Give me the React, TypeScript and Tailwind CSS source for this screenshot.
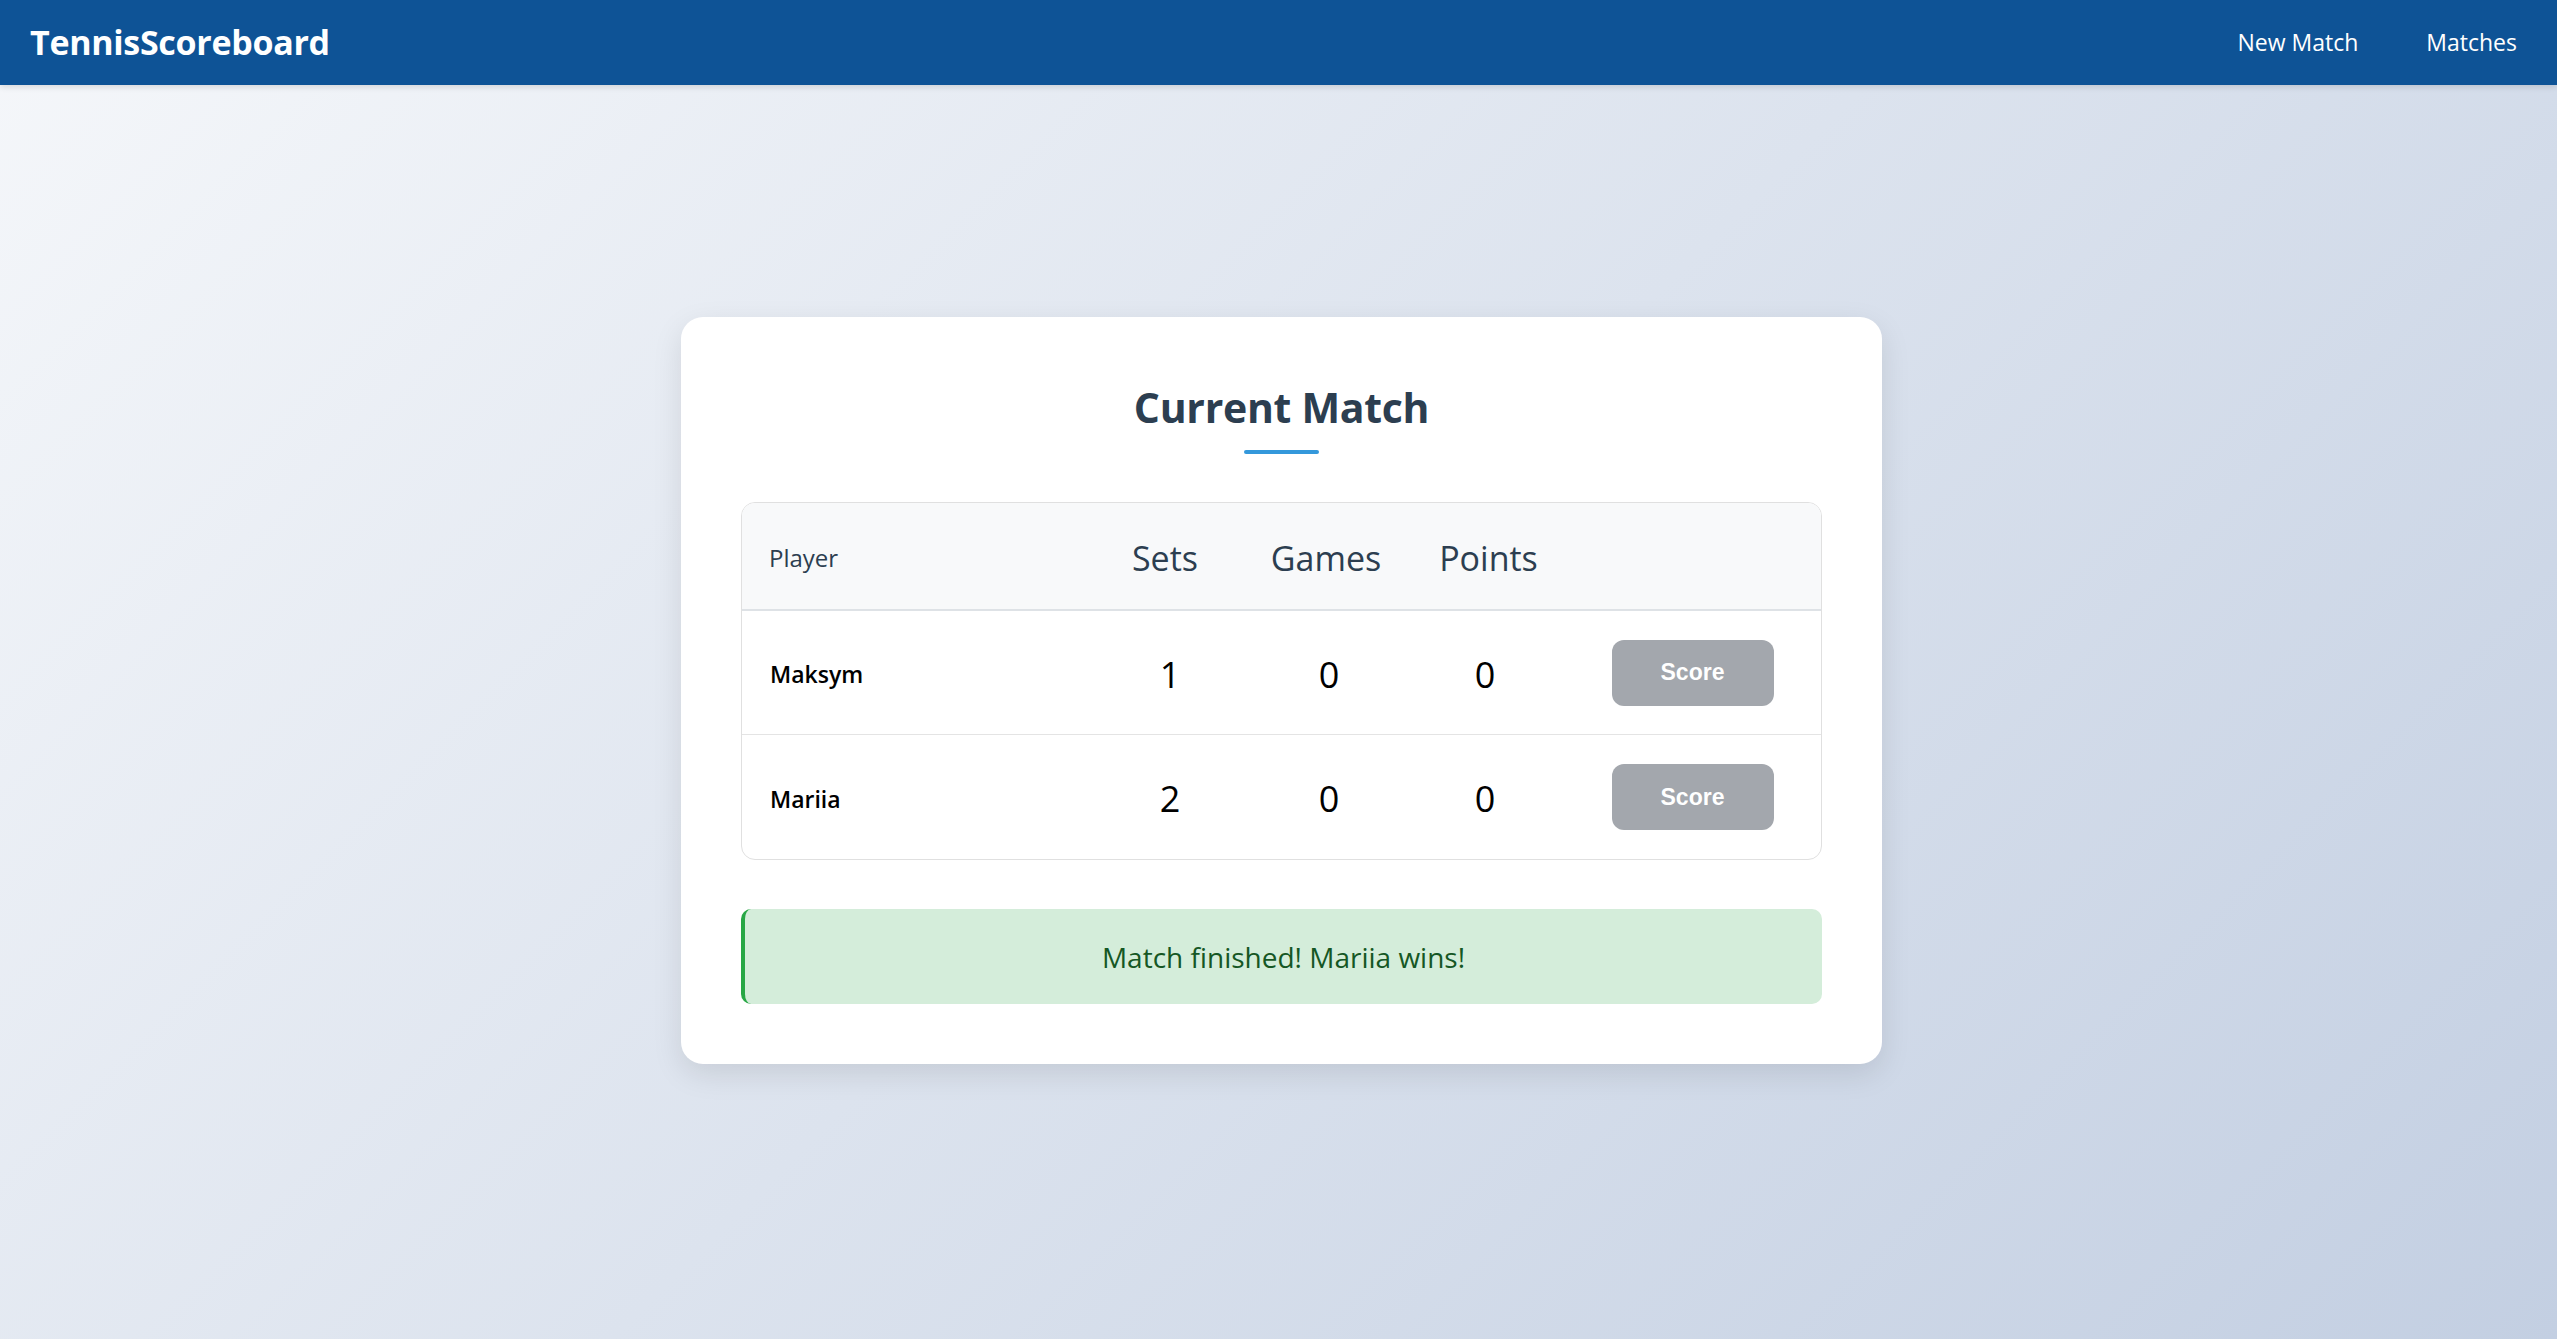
import React from "react";

const rows = [
  { name: "Maksym", sets: 1, games: 0, points: 0 },
  { name: "Mariia", sets: 2, games: 0, points: 0 },
];

export default function App() {
  return (
    <div
      className="min-h-screen w-full bg-[linear-gradient(135deg,#f5f7fa_0%,#c3cfe2_100%)]"
      style={{ fontFamily: '"Open Sans", "Noto Sans", sans-serif' }}
    >
      <header className="h-[85px] bg-[#0e5396] flex items-center justify-between pl-[30px] pr-[40px] shadow-[0_2px_6px_rgba(0,0,0,0.12)]">
        <div className="text-white font-bold text-[34px] tracking-[-0.3px]">TennisScoreboard</div>
        <nav className="flex items-center gap-[68px] text-white text-[23px]">
          <a>New Match</a>
          <a>Matches</a>
        </nav>
      </header>

      <main className="flex justify-center pl-[6px] pt-[232px] pb-[274px]">
        <div className="w-[1201px] bg-white rounded-[22px] shadow-[0_10px_30px_rgba(0,0,0,0.1)] px-[60px] pt-[62px] pb-[60px]">
          <div className="flex flex-col items-center">
            <h2 className="text-[41px] leading-[56px] font-bold text-[#2c3e50] tracking-[-0.3px]">Current Match</h2>
            <div className="mt-[15px] w-[75px] h-[4px] rounded-full bg-[#3498db]" />
          </div>

          <div className="mt-[48px] border border-[#e0e0e0] rounded-[14px] overflow-hidden">
            <div className="grid grid-cols-[343px_160px_162px_163px_1fr] h-[108px] items-center bg-[#f8f9fa] border-b-2 border-[#dee2e6] text-[#2c3e50]">
              <div className="pl-[27px] pt-[4px] text-[24px]">Player</div>
              <div className="pt-[4px] text-center text-[34px]">Sets</div>
              <div className="pt-[4px] text-center text-[34px]">Games</div>
              <div className="pt-[4px] text-center text-[34px]">Points</div>
              <div />
            </div>
            {rows.map((r, i) => (
              <div
                key={r.name}
                className={`grid grid-cols-[350px_156px_162px_150px_1fr] h-[124px] items-center ${i === 0 ? "border-b border-[#e4e4e4]" : ""}`}
              >
                <div className="pl-[28px] pt-[4px] text-[23px] font-semibold text-black">{r.name}</div>
                <div className="pt-[4px] text-center text-[36px] text-black">{r.sets}</div>
                <div className="pt-[4px] text-center text-[36px] text-black">{r.games}</div>
                <div className="pt-[4px] text-center text-[36px] text-black">{r.points}</div>
                <div className="flex justify-center pl-[4px]">
                  <button
                    className="w-[162px] h-[66px] rounded-[12px] bg-[#a3a7ad] text-white text-[23px] font-bold"
                    style={{ fontFamily: '"Liberation Sans", Arial, sans-serif' }}
                  >
                    Score
                  </button>
                </div>
              </div>
            ))}
          </div>

          <div className="mt-[49px] h-[95px] flex items-center justify-center bg-[#d4edda] border-l-[4px] border-[#28a745] rounded-[10px] text-[#155724] text-[28px] font-medium">
            Match finished! Mariia wins!
          </div>
        </div>
      </main>
    </div>
  );
}
